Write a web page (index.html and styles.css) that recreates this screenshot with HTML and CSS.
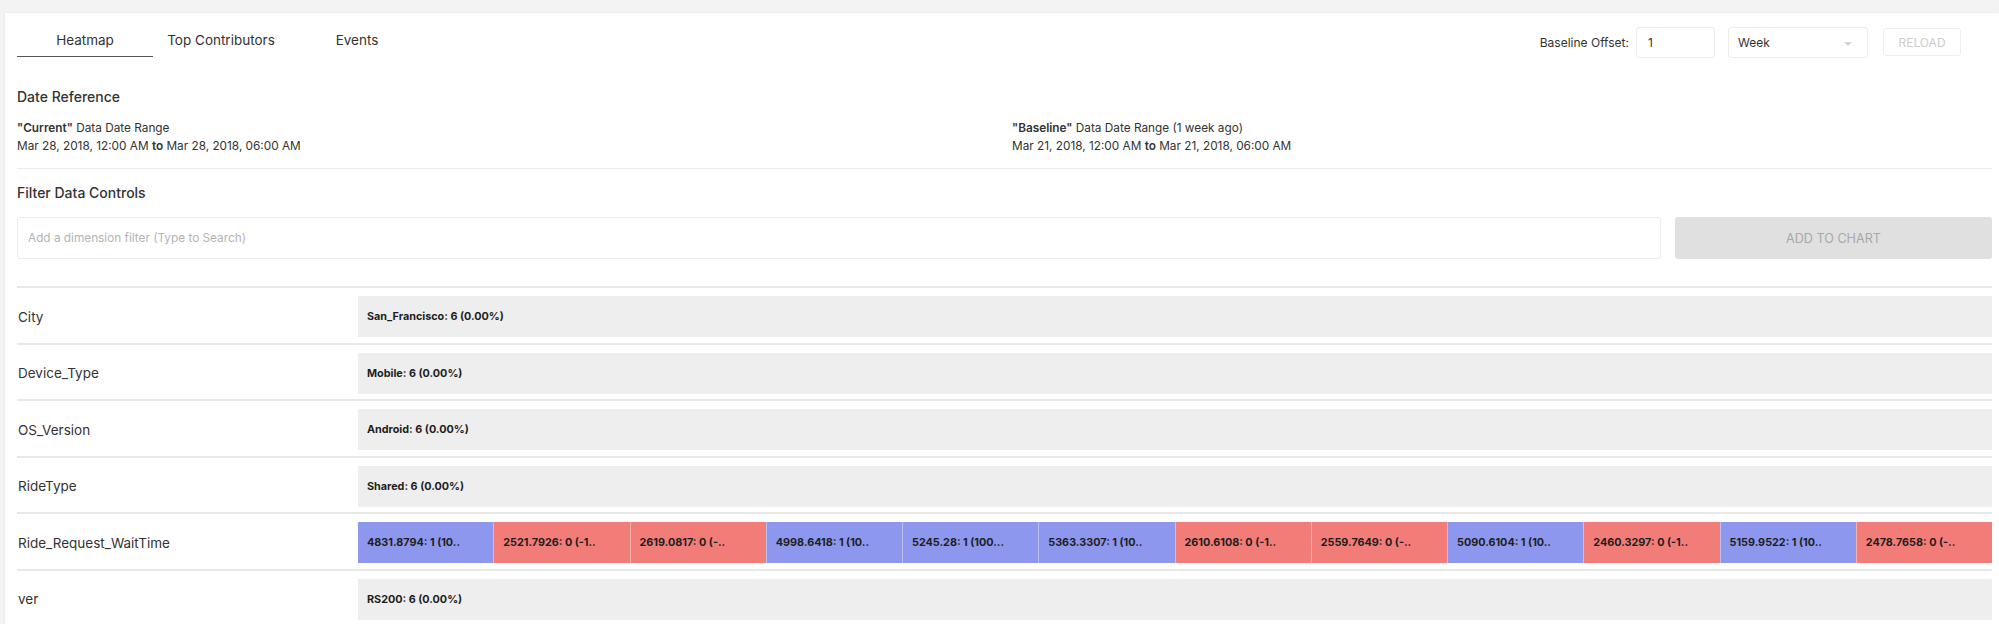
FILE: index.html
```html
<!DOCTYPE html>
<html>
<head>
    <title>Heatmap</title>
    <link rel="stylesheet" href="styles.css">
</head>
<body>
    <div class="panel">
        <div class="toolbar">
            <div class="tabs">
                <div class="tab active">Heatmap</div>
                <div class="tab">Top Contributors</div>
                <div class="tab">Events</div>
            </div>
            <div class="offset">
                <span class="offset-label">Baseline Offset:</span>
                <div class="field offset-value">1</div>
                <div class="field offset-unit">Week<span class="caret"></span></div>
                <button class="reload" disabled>RELOAD</button>
            </div>
        </div>

        <div class="section-title date-title">Date Reference</div>
        <div class="date-ranges">
            <div class="date-range">
                <div><b>"Current"</b> Data Date Range</div>
                <div>Mar 28, 2018, 12:00 AM <b>to</b> Mar 28, 2018, 06:00 AM</div>
            </div>
            <div class="date-range">
                <div><b>"Baseline"</b> Data Date Range (1 week ago)</div>
                <div>Mar 21, 2018, 12:00 AM <b>to</b> Mar 21, 2018, 06:00 AM</div>
            </div>
        </div>

        <div class="divider"></div>

        <div class="section-title filter-title">Filter Data Controls</div>
        <div class="filter-row">
            <div class="filter-input">Add a dimension filter (Type to Search)</div>
            <button class="add-chart" disabled>ADD TO CHART</button>
        </div>

        <div class="heatmap">
            <div class="dim-row">
                <div class="dim-name">City</div>
                <div class="bar"><div class="cell">San_Francisco: 6 (0.00%)</div></div>
            </div>
            <div class="dim-row">
                <div class="dim-name">Device_Type</div>
                <div class="bar"><div class="cell">Mobile: 6 (0.00%)</div></div>
            </div>
            <div class="dim-row">
                <div class="dim-name">OS_Version</div>
                <div class="bar"><div class="cell">Android: 6 (0.00%)</div></div>
            </div>
            <div class="dim-row">
                <div class="dim-name">RideType</div>
                <div class="bar"><div class="cell">Shared: 6 (0.00%)</div></div>
            </div>
            <div class="dim-row">
                <div class="dim-name">Ride_Request_WaitTime</div>
                <div class="bar">
                    <div class="cell up">4831.8794: 1 (10..</div>
                    <div class="cell down">2521.7926: 0 (-1..</div>
                    <div class="cell down">2619.0817: 0 (-..</div>
                    <div class="cell up">4998.6418: 1 (10..</div>
                    <div class="cell up">5245.28: 1 (100...</div>
                    <div class="cell up">5363.3307: 1 (10..</div>
                    <div class="cell down">2610.6108: 0 (-1..</div>
                    <div class="cell down">2559.7649: 0 (-..</div>
                    <div class="cell up">5090.6104: 1 (10..</div>
                    <div class="cell down">2460.3297: 0 (-1..</div>
                    <div class="cell up">5159.9522: 1 (10..</div>
                    <div class="cell down">2478.7658: 0 (-..</div>
                </div>
            </div>
            <div class="dim-row">
                <div class="dim-name">ver</div>
                <div class="bar"><div class="cell">RS200: 6 (0.00%)</div></div>
            </div>
        </div>
    </div>
</body>
</html>
```

FILE: styles.css
```css
body {
    margin: 0;
    background: #f3f3f3;
    font-family: Inter, 'Noto Sans', sans-serif;
    color: #333;
}
.panel {
    margin: 13px 0 0 5px;
    padding: 12px 7px 0 12px;
    background: #fff;
    box-shadow: 0 0 2px rgba(0, 0, 0, 0.08);
    height: 620px;
    box-sizing: border-box;
}
.toolbar {
    display: flex;
    align-items: center;
    justify-content: space-between;
    height: 32px;
}
.tabs {
    display: flex;
    align-self: flex-start;
}
.tab {
    width: 136px;
    height: 31px;
    line-height: 30px;
    text-align: center;
    font-size: 13.5px;
    color: #333;
}
.tab.active {
    border-bottom: 1.5px solid #555;
}
.offset {
    display: flex;
    align-items: center;
    margin-right: 31px;
    margin-top: 2px;
}
.offset-label {
    font-size: 12px;
    margin-right: 7px;
}
.field {
    height: 31px;
    box-sizing: border-box;
    border: 1px solid #ececec;
    border-radius: 3px;
    font-size: 12px;
    line-height: 29px;
    padding-left: 11px;
}
.offset-value {
    width: 79px;
    margin-right: 13px;
}
.offset-unit {
    width: 140px;
    padding-left: 9px;
    position: relative;
    margin-right: 15px;
}
.caret {
    position: absolute;
    right: 15px;
    top: 14px;
    border-left: 4px solid transparent;
    border-right: 4px solid transparent;
    border-top: 4px solid #d4d4d4;
}
.reload {
    width: 78px;
    height: 28px;
    background: #fff;
    border: 1px solid #eee;
    border-radius: 3px;
    color: #ccc;
    font-family: inherit;
    font-size: 12px;
    padding: 0;
}
.section-title {
    font-size: 14px;
    font-weight: 500;
    line-height: 20px;
}
.date-title {
    margin-top: 30px;
}
.date-ranges {
    display: grid;
    grid-template-columns: 995px 1fr;
    margin-top: 12px;
    font-size: 11.8px;
    line-height: 18px;
}
.date-range b {
    font-weight: 600;
}
.divider {
    height: 1px;
    background: #ebebeb;
    margin-top: 13px;
}
.filter-title {
    margin-top: 14px;
}
.filter-row {
    display: grid;
    grid-template-columns: 1fr 317px;
    gap: 14px;
    margin-top: 14px;
    height: 42px;
}
.filter-input {
    border: 1px solid #ececec;
    border-radius: 3px;
    font-size: 11.8px;
    color: #b3b3b3;
    line-height: 40px;
    padding-left: 10px;
}
.add-chart {
    border: none;
    border-radius: 3px;
    background: #e0e0e0;
    color: #a8a8a8;
    font-family: inherit;
    font-size: 12.6px;
}
.heatmap {
    margin-top: 27px;
    border-top: 2px solid #e8e8e8;
}
.dim-row {
    display: grid;
    grid-template-columns: 341px 1fr;
    align-items: center;
    padding: 8px 0 5.5px;
    border-bottom: 2px solid #e8e8e8;
}
.dim-name {
    font-size: 13.5px;
    padding-left: 1px;
}
.bar {
    display: flex;
    height: 41px;
    background: #eee;
}
.cell {
    flex: 1;
    font-size: 10.8px;
    font-weight: 700;
    color: #1e1e1e;
    line-height: 41px;
    padding-left: 9px;
    white-space: nowrap;
    overflow: hidden;
}
.cell.up {
    background: #8d97ed;
}
.cell.down {
    background: #f27c78;
}
.cell + .cell {
    border-left: 1px solid rgba(255, 255, 255, 0.4);
}
```
